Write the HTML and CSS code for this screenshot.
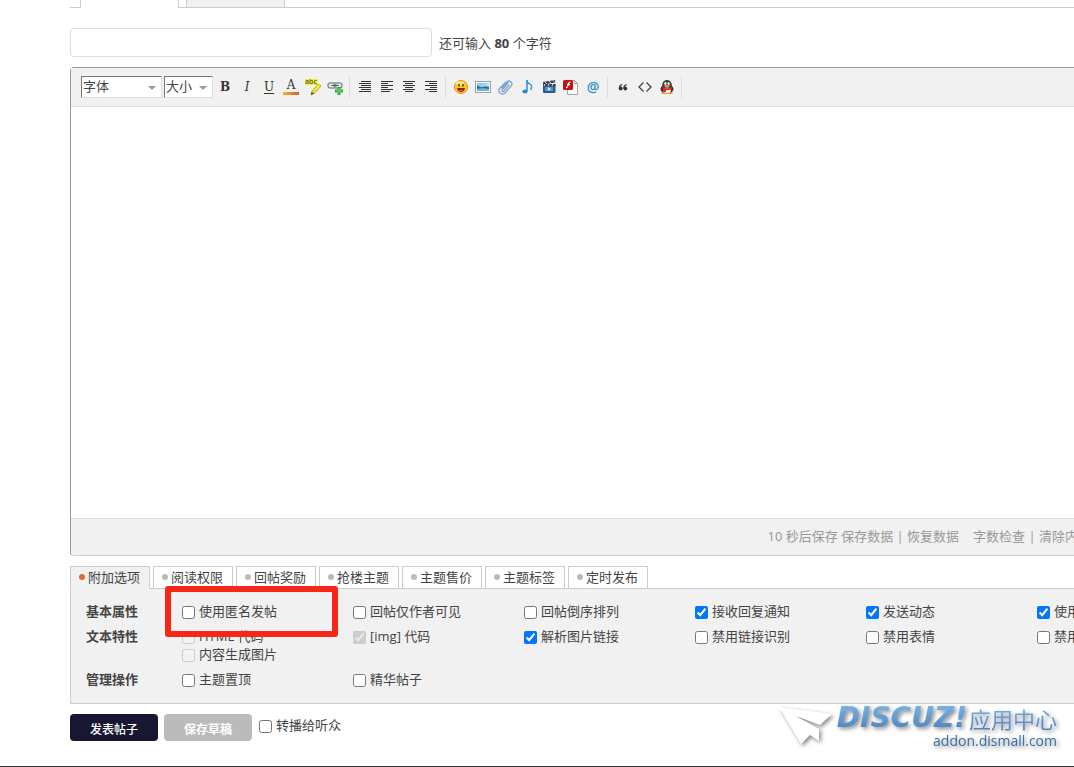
FILE: index.html
```html
<!DOCTYPE html>
<html lang="zh-CN">
<head>
<meta charset="utf-8">
<title>发表帖子</title>
<link rel="stylesheet" href="styles.css">
</head>
<body>
<form class="page">
  <div class="wide">
    <div class="top-tabs"><span class="top-tab current"></span><span class="top-tab"></span></div>
    <div class="subject">
      <input class="subject-input" type="text" aria-label="标题">
      <span>还可输入 <strong>80</strong> 个字符</span>
    </div>

    <section class="editor">
      <div class="toolbar">
        <span class="pick pick-font"><select aria-label="字体"><option>字体</option></select></span>
        <span class="pick pick-size"><select aria-label="大小"><option>大小</option></select></span>
        <div class="tools">
          <button type="button" class="tool serif bold" aria-label="粗体">B</button>
          <button type="button" class="tool serif italic" aria-label="斜体">I</button>
          <button type="button" class="tool serif underline" aria-label="下划线">U</button>
          <button type="button" class="tool serif color" aria-label="文字颜色">A</button>
          <button type="button" class="tool" aria-label="背景色"><svg viewBox="0 0 16 16"><path d="M0 0h13l-1 6H0z" fill="#f7ed35"/><text x="0" y="5" class="abc">abc</text><path d="M13 5l3 2-6 7-4 2 1-4z" fill="#eedb24" stroke="#aa971b" stroke-width=".7"/><path d="M6.500 13l2.500 1.500-3 1.500z" fill="#444"/><path d="M9 12l5-5" stroke="#fff475"/></svg></button>
          <button type="button" class="tool" aria-label="添加链接"><svg viewBox="0 0 16 16"><g fill="none" stroke="#8d9297" stroke-width="1.500"><rect x="1" y="4" width="8" height="5" rx="2.500"/><rect x="7" y="4" width="8" height="5" rx="2.500"/></g><path d="M4 6.500h8" stroke="#555e66"/><path d="M10.500 8h3v2.500H16v3h-2.500V16h-3v-2.500H8v-3h2.500z" fill="#27a13a"/><path d="M12 9v6M9 12h6" stroke="#77da75"/></svg></button>
        </div>
        <div class="tools">
          <button type="button" class="tool" aria-label="自动排版"><svg viewBox="0 0 16 16"><path d="M4 2.500h10M2 4.500h12M4 6.500h10M2 8.500h12M4 10.500h10M2 12.500h12" stroke="#333"/></svg></button>
          <button type="button" class="tool" aria-label="居左"><svg viewBox="0 0 16 16"><path d="M2 2.500h12M2 4.500h7M2 6.500h12M2 8.500h7M2 10.500h12M2 12.500h9" stroke="#333"/></svg></button>
          <button type="button" class="tool" aria-label="居中"><svg viewBox="0 0 16 16"><path d="M2 2.500h12M4 4.500h8M2 6.500h12M4 8.500h8M2 10.500h12M4 12.500h8" stroke="#333"/></svg></button>
          <button type="button" class="tool" aria-label="居右"><svg viewBox="0 0 16 16"><path d="M2 2.500h12M6 4.500h8M2 6.500h12M7 8.500h7M2 10.500h12M6 12.500h8" stroke="#333"/></svg></button>
        </div>
        <div class="tools">
          <button type="button" class="tool" aria-label="表情"><svg viewBox="0 0 16 16"><circle cx="8" cy="8" r="6.600" fill="#ffc52d" stroke="#e5962a"/><ellipse cx="7" cy="4" rx="4" ry="2" fill="#ffe679"/><path d="M6 5v2.500M10 5v2.500" stroke="#4b2b15" stroke-width="1.300"/><path d="M4 9h8q-.5 4-4 4t-4-4" fill="#743016"/><path d="M5.500 11.500q2.500-1.500 5 0-2.500 2-5 0" fill="#ee4d2e"/></svg></button>
          <button type="button" class="tool" aria-label="图片"><svg viewBox="0 0 16 16"><rect x=".5" y="2.500" width="15" height="11" fill="#fff" stroke="#8fa5b2"/><path d="M2 4h12v8H2z" fill="#8dcff2"/><path d="M2 6q3 3 6 2t6 0v3H2z" fill="#276b98"/><path d="M2 10l6-1 6 1v2H2z" fill="#7ab3cd"/><path d="M8 5h6v2z" fill="#d6f1fa"/></svg></button>
          <button type="button" class="tool" aria-label="附件"><svg viewBox="0 0 16 16"><path d="M5 9l5-6q2-2 4 0t0 4l-6 7q-2.500 2-5 0t0-5l6-6M5 11l6-7M5 12q1 1 2 0l5-6" fill="none" stroke="#79a5d3" stroke-width="1.300" stroke-linecap="round"/></svg></button>
          <button type="button" class="tool" aria-label="音乐"><svg viewBox="0 0 16 16"><path d="M8 1.500q0 2.500 3 3.500 3 2 .5 6" fill="none" stroke="#3e9ddd" stroke-width="1.500"/><path d="M8 1v11" stroke="#2686cc" stroke-width="1.400"/><ellipse cx="6" cy="12.500" rx="2.600" ry="2" fill="#2588ce"/></svg></button>
          <button type="button" class="tool" aria-label="视频"><svg viewBox="0 0 16 16"><path d="M2 3l12-2 .4 2.500L2.400 5.500z" fill="#303b47"/><path d="M4 3l2 2M8 2l2 2M12 1.500l2 2" stroke="#dce5ed"/><rect x="2" y="5" width="12.500" height="9" rx="1" fill="#315a88"/><path d="M2 5h12.500v2H2z" fill="#303b47"/><path d="M4 5l-1 2M8 5L7 7m5-2l-1 2" stroke="#eee"/><path d="M4 8h8v4H4z" fill="#4d99d9"/><path d="M7 8l3 2-3 2z" fill="#d8f2ff"/></svg></button>
          <button type="button" class="tool" aria-label="Flash"><svg viewBox="0 0 16 16"><path d="M4.500 1.500h7l3 3v11h-10z" fill="#fff" stroke="#a5a5a5"/><path d="M11.500 1.500v3h3" fill="none" stroke="#a5a5a5"/><rect x="0" y="1" width="10" height="10" rx="1.500" fill="#bd1515"/><path d="M7.500 3Q5.500 3 5 6T3 8.500M4 5.700h3" fill="none" stroke="#fff" stroke-width="1.200"/></svg></button>
          <button type="button" class="tool at" aria-label="@朋友">@</button>
        </div>
        <div class="tools">
          <button type="button" class="tool" aria-label="引用"><svg viewBox="0 0 16 16"><g fill="#333"><circle cx="5.700" cy="9.500" r="1.900"/><circle cx="10.300" cy="9.500" r="1.900"/></g><path d="M4.400 9.500Q4 6.500 7 5.500M9 9.500Q8.600 6.500 11.600 5.500" fill="none" stroke="#333" stroke-width="1.200"/></svg></button>
          <button type="button" class="tool" aria-label="代码"><svg viewBox="0 0 16 16"><path d="M6.500 3.500L2 8l4.500 4.500M9.500 3.500L14 8l-4.500 4.500" fill="none" stroke="#444" stroke-width="1.300"/></svg></button>
          <button type="button" class="tool" aria-label="QQ表情"><svg viewBox="0 0 16 16"><ellipse cx="8" cy="10" rx="6.500" ry="4.500" fill="#333"/><ellipse cx="8" cy="6" rx="4.800" ry="5" fill="#3b3b3b"/><ellipse cx="8" cy="11.500" rx="3.800" ry="3" fill="#fff"/><ellipse cx="6.400" cy="4.500" rx="1.100" ry="1.500" fill="#fff"/><ellipse cx="9.600" cy="4.500" rx="1.100" ry="1.500" fill="#fff"/><path d="M4.500 7q3.500-2 7 0-3.500 2-7 0" fill="#f8a028"/><path d="M3 8q5 2.500 10 0v2q-3 1.500-6 1v2H4v-3z" fill="#e42922"/><path d="M2 14q3-1.500 5.500 0v1H3zM14 14q-3-1.500-5.500 0v1H13z" fill="#ed9928"/></svg></button>
        </div>
      </div>
      <textarea class="content" aria-label="帖子内容"></textarea>
      <div class="status">
        <span>10 秒后保存 <a href="#">保存数据</a> | <a href="#">恢复数据</a></span>
        <span><a href="#">字数检查</a> | <a href="#">清除内容</a></span>
      </div>
    </section>

    <nav class="tabs">
      <button type="button" class="tab active">附加选项</button>
      <button type="button" class="tab">阅读权限</button>
      <button type="button" class="tab">回帖奖励</button>
      <button type="button" class="tab">抢楼主题</button>
      <button type="button" class="tab">主题售价</button>
      <button type="button" class="tab">主题标签</button>
      <button type="button" class="tab">定时发布</button>
    </nav>
    <div class="options">
      <div class="row">
        <strong>基本属性</strong>
        <div class="choices">
          <label class="marked"><input type="checkbox">使用匿名发帖</label>
          <label><input type="checkbox">回帖仅作者可见</label>
          <label><input type="checkbox">回帖倒序排列</label>
          <label><input type="checkbox" checked>接收回复通知</label>
          <label><input type="checkbox" checked>发送动态</label>
          <label><input type="checkbox" checked>使用个人签名</label>
        </div>
      </div>
      <div class="row">
        <strong>文本特性</strong>
        <div class="choices">
          <label><input type="checkbox" disabled>HTML 代码</label>
          <label><input type="checkbox" checked disabled>[img] 代码</label>
          <label><input type="checkbox" checked>解析图片链接</label>
          <label><input type="checkbox">禁用链接识别</label>
          <label><input type="checkbox">禁用表情</label>
          <label><input type="checkbox">禁用编辑器代码</label>
          <label><input type="checkbox" disabled>内容生成图片</label>
        </div>
      </div>
      <div class="row">
        <strong>管理操作</strong>
        <div class="choices">
          <label><input type="checkbox">主题置顶</label>
          <label><input type="checkbox">精华帖子</label>
        </div>
      </div>
    </div>
  </div>

  <footer class="actions">
    <button type="button" class="btn primary">发表帖子</button>
    <button type="button" class="btn draft">保存草稿</button>
    <label class="relay"><input type="checkbox">转播给听众</label>
    <div class="brand">
      <svg class="plane" viewBox="0 0 56 46"><path d="M1 3L54 10 42 21 18 12l23 13v12l-9-6-9 9z" fill="#fff"/></svg>
      <div class="brand-text">
        <div class="brand-top"><span class="brand-name">DISCUZ!</span><span class="brand-cn">应用中心</span></div>
        <div class="brand-url">addon.dismall.com</div>
      </div>
    </div>
  </footer>
</form>
</body>
</html>
```
FILE: styles.css
```css
*, ::before, ::after { box-sizing: border-box; }
html { overflow: hidden; }
body {
  margin: 0;
  background: #fff;
  color: #444;
  font: 13px/18px "Open Sans", "Noto Sans CJK SC", sans-serif;
}
button, input, select, textarea { font: inherit; color: inherit; }
a { color: inherit; text-decoration: none; }
.page {
  display: flex;
  flex-direction: column;
  min-height: 100vh;
  padding-left: 70px;
  border-bottom: 1px solid #333;
}
.wide { margin-right: -140px; }

.top-tabs {
  display: flex;
  gap: 7px;
  height: 8px;
  padding-left: 10px;
  border-bottom: 1px solid #cdcdcd;
}
.top-tab {
  width: 99px;
  height: 7px;
  border: solid #cdcdcd;
  border-width: 0 1px;
  background: #f1f1f1;
}
.top-tab.current { height: 8px; background: #fff; }

.subject {
  display: flex;
  align-items: center;
  gap: 7px;
  margin: 20px 0 10px;
}
.subject-input {
  width: 362px;
  height: 29px;
  padding: 4px 8px;
  border: 1px solid #ddd;
  border-radius: 4px;
}

.editor { border: 1px solid #999; border-bottom-color: #cdcdcd; border-radius: 4px 0 0 4px; }
.toolbar {
  display: flex;
  align-items: center;
  height: 39px;
  padding-left: 10px;
  border-bottom: 1px solid #ddd;
  background: #f1f1f1;
}
.pick { position: relative; margin-right: 2px; }
.pick::after {
  content: "";
  position: absolute;
  right: 6px;
  top: 10px;
  border: solid transparent;
  border-width: 4px 4px 0;
  border-top-color: #999;
  pointer-events: none;
}
.pick select {
  appearance: none;
  display: block;
  width: 100%;
  height: 22px;
  padding: 0 1px 2px;
  border: 1px solid;
  border-color: #777 #ddd #ddd #777;
  border-radius: 0;
  background: #fff;
}
.pick-font { width: 81px; }
.pick-size { width: 49px; }
.tools {
  display: flex;
  gap: 2px;
  height: 22px;
  padding-right: 4px;
  margin-right: 5px;
  border-right: 1px solid #ddd;
}
.tool {
  display: flex;
  align-items: center;
  justify-content: center;
  width: 20px;
  height: 22px;
  padding: 0;
  border: 0;
  background: none;
}
.tool svg { width: 16px; height: 16px; overflow: visible; }
.serif { color: #333; font: 12px/14px "DejaVu Serif", serif; }
.bold { font-weight: 700; }
.italic { font-style: italic; }
.underline { text-decoration: underline; text-underline-offset: 2px; }
.color {
  background: linear-gradient(90deg, #f3b52c, #d35f2e) center 16px / 16px 3px no-repeat;
  padding-bottom: 4px;
}
.abc { font: 600 7px "Open Sans", sans-serif; fill: #555b18; }
.at { color: #278ad0; font-size: 14px; font-weight: 600; }
.content {
  display: block;
  width: 100%;
  height: 411px;
  border: 0;
  resize: none;
  outline: 0;
}
.status {
  display: flex;
  justify-content: flex-end;
  align-items: center;
  gap: 14px;
  height: 37px;
  padding: 0 122px 2px 0;
  border-top: 1px solid #ddd;
  border-bottom-left-radius: 4px;
  background: #f1f1f1;
  color: #999;
}

.tabs { display: flex; gap: 3px; margin-top: 10px; }
.tab {
  display: flex;
  align-items: center;
  gap: 3px;
  width: 80px;
  height: 23px;
  padding: 0 0 1px 8px;
  border: 1px solid #cdcdcd;
  background: #fff;
  white-space: nowrap;
}
.tab::before {
  content: "";
  width: 6px;
  height: 6px;
  border-radius: 50%;
  background: #bbb;
}
.tab.active { z-index: 1; border-bottom-color: #f1f1f1; background: #f1f1f1; }
.tab.active::before { background: #e06c25; }
.options {
  display: grid;
  gap: 7px;
  margin-top: -1px;
  padding: 13px 0 15px 15px;
  border: 1px solid #cdcdcd;
  background: #f1f1f1;
}
.row { display: grid; grid-template-columns: 96px 1fr; }
.choices { display: grid; grid-template-columns: repeat(6, 171px); }
label { display: flex; align-items: center; gap: 4px; white-space: nowrap; }
label input { width: 13px; height: 13px; margin: 2px 0 0; }
.marked { position: relative; }
.marked::after {
  content: "";
  position: absolute;
  left: -17px;
  top: -16px;
  width: 173px;
  height: 51px;
  border: 6px solid #f72717;
  border-radius: 3px;
}

.actions {
  display: flex;
  align-items: flex-start;
  gap: 6px;
  padding: 10px 17px 0 0;
}
.btn {
  width: 88px;
  height: 27px;
  padding: 4px 0 0;
  border: 0;
  border-radius: 4px;
  color: #fff;
  font-size: 12px;
}
.primary { background: #171733; font-weight: 500; }
.draft { background: #bbb; font-weight: 700; }
.relay { margin: 2px 0 0 1px; }
.brand {
  display: flex;
  gap: 3px;
  margin: -10px 0 0 auto;
  filter: drop-shadow(2px 2px 2px #0007);
}
.plane { width: 56px; height: 46px; }
.brand-text { text-align: right; white-space: nowrap; }
.brand-top { display: flex; align-items: center; gap: 2px; }
.brand-name, .brand-cn {
  background: linear-gradient(#79b6e4, #4a7fc0);
  background-clip: text;
  color: transparent;
}
.brand-name { font: italic bold 28px/28px "DejaVu Sans", sans-serif; }
.brand-cn { font: 22px/28px "Noto Sans CJK SC", sans-serif; }
.brand-url { color: #386fa5; font-size: 14px; line-height: 18px; }
```
